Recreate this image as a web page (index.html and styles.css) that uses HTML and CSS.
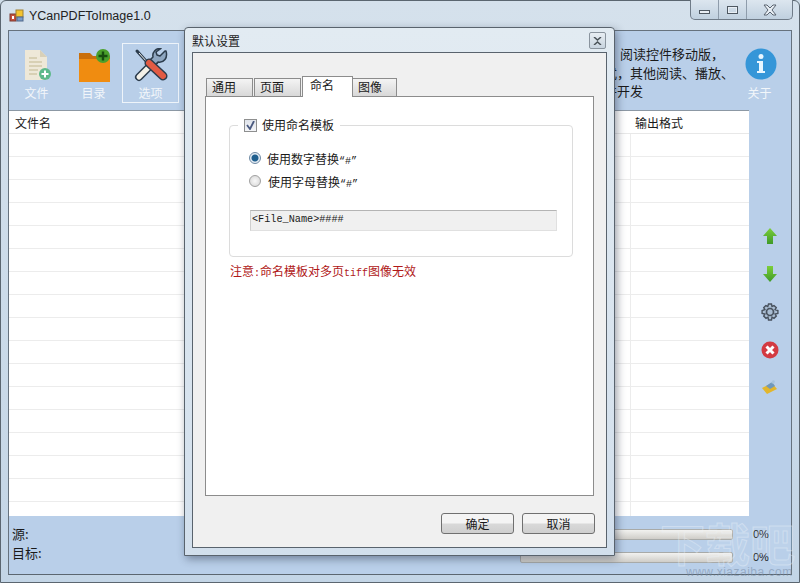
FILE: index.html
```html
<!DOCTYPE html>
<html lang="zh">
<head>
<meta charset="utf-8">
<title>YCanPDFToImage1.0</title>
<link rel="stylesheet" href="styles.css">
</head>
<body>
<div class="window">
  <div class="titlebar">
    <svg class="appicon" width="16" height="16" viewBox="0 0 16 16"><rect x="1" y="6" width="6" height="7" fill="#c8503c" stroke="#7a3a30"/><rect x="3" y="8" width="2" height="3" fill="#fff"/><rect x="7" y="2" width="7" height="7" fill="#f4c430" stroke="#a08030"/><rect x="8" y="9" width="6" height="4" fill="#7a9cc8" stroke="#50688a"/></svg>
    <span class="apptitle">YCanPDFToImage1.0</span>
    <div class="caption">
      <span class="capbtn min"><i></i></span>
      <span class="capbtn max"><i></i></span>
      <span class="capbtn close">
        <svg width="16" height="12" viewBox="0 0 16 12"><path d="M2 1h3l3 3 3-3h3L10 6l4 5h-3L8 8l-3 3H2l4-5z" fill="#e8eef4" stroke="#5a6470"/></svg>
      </span>
    </div>
  </div>
  <div class="client">
    <div class="toolbar">
      <div class="tool t1">
        <svg width="30" height="34" viewBox="0 0 30 34"><path d="M2 1h15l7 7v23H2z" fill="#eee8d8"/><path d="M17 1v7h7z" fill="#d8d0b8"/><path d="M6 9h8M6 13h13M6 17h13M6 21h9M6 25h8" stroke="#d8d0b4" stroke-width="2"/><circle cx="22" cy="25" r="6" fill="#5db98a"/><path d="M22 21.500v7M18.500 25h7" stroke="#fff" stroke-width="2"/></svg>
        <span>文件</span>
      </div>
      <div class="tool t2">
        <svg width="34" height="34" viewBox="0 0 34 34"><path d="M1 4h11l3 3h17v26H1z" fill="#c96f0c"/><path d="M1 10h31v23H1z" fill="#f08c10"/><circle cx="25" cy="7" r="7" fill="#4aa02c"/><path d="M25 2.500v9M20.500 7h9" stroke="#174d10" stroke-width="2.400"/></svg>
        <span>目录</span>
      </div>
      <div class="tool t3 selected">
        <svg width="34" height="34" viewBox="0 0 34 34">
          <path d="M5 29L21 13" stroke="#2c3c4c" stroke-width="8" stroke-linecap="round"/>
          <path d="M5 29L21 13" stroke="#f4f1e8" stroke-width="5" stroke-linecap="round"/>
          <path d="M31 3l-5 5-3-1-1-3 5-3.500C22 0 18 4 19 9l-3 3 5 5 3-3c6 1 10-4 8-11z" fill="#8ea6c0" stroke="#2c3c4c" stroke-width="1.500" stroke-linejoin="round"/>
          <path d="M3 3l9 10" stroke="#2c3c4c" stroke-width="3" stroke-linecap="round"/>
          <path d="M5 5l8 9" stroke="#f0f0f0" stroke-width="1"/>
          <path d="M15 15l14 13" stroke="#2c3c4c" stroke-width="9" stroke-linecap="round"/>
          <path d="M15 15l14 13" stroke="#e25b44" stroke-width="6" stroke-linecap="round"/>
        </svg>
        <span>选项</span>
      </div>
      <div class="promo">
        <div class="promo-first">阅读控件移动版，</div>
        <div>式，其他阅读、播放、</div>
        <div>件开发</div>
      </div>
      <div class="tool t4">
        <svg width="32" height="32" viewBox="0 0 32 32"><circle cx="16" cy="16" r="15.500" fill="#3596d8"/><circle cx="16" cy="8.500" r="2.500" fill="#e8f6ff"/><path d="M12 13h6v10h2v2h-8v-2h2v-8h-2z" fill="#e8f6ff"/></svg>
        <span>关于</span>
      </div>
    </div>
    <div class="middle">
      <div class="table">
        <div class="thead">
          <span class="th-name">文件名</span>
          <span class="th-format">输出格式</span>
        </div>
        <div class="tbody">
          <div class="row"></div><div class="row"></div><div class="row"></div><div class="row"></div>
          <div class="row"></div><div class="row"></div><div class="row"></div><div class="row"></div>
          <div class="row"></div><div class="row"></div><div class="row"></div><div class="row"></div>
          <div class="row"></div><div class="row"></div><div class="row"></div><div class="row"></div>
          <div class="column-line"></div>
        </div>
      </div>
      <div class="sidebar">
        <svg width="16" height="18" viewBox="0 0 16 18"><defs><linearGradient id="gu" x1="0" y1="0" x2="0" y2="1"><stop offset="0" stop-color="#7ccf3a"/><stop offset="1" stop-color="#3f9a28"/></linearGradient></defs><path d="M8 1l7 8h-4v8H5V9H1z" fill="url(#gu)"/></svg>
        <svg width="16" height="18" viewBox="0 0 16 18"><path d="M8 17L1 9h4V1h6v8h4z" fill="url(#gu)"/></svg>
        <svg width="18" height="18" viewBox="0 0 18 18"><path d="M7.500 1h3l.5 2.500 2-1 2.300 2.200-1.200 2L16.900 7.500v3l-2.800.6 1.200 2-2.300 2.200-2-1.100-.5 2.800h-3l-.5-2.800-2 1.100-2.300-2.200 1.200-2-2.800-.6v-3l2.800-.8-1.200-2L4.800 2.500l2 1z" fill="#a9bdd2" stroke="#48525e" stroke-width="1.400"/><circle cx="9" cy="9" r="3.500" fill="none" stroke="#48525e" stroke-width="1.700"/></svg>
        <svg width="18" height="18" viewBox="0 0 18 18"><circle cx="9" cy="9" r="8.500" fill="#d33a42"/><path d="M5.500 5.500l7 7M12.500 5.500l-7 7" stroke="#fff" stroke-width="3"/></svg>
        <svg width="18" height="16" viewBox="0 0 18 16"><path d="M1 9l10-5 5 6-10 5z" fill="#e2b62c"/><path d="M5 7l6-4 3 4-5 3z" fill="#6f98bc"/><path d="M10 4l2-3 2 1-1 3z" fill="#a8c4dc"/></svg>
      </div>
    </div>
    <div class="status">
      <div class="labels">
        <span>源:</span>
        <span>目标:</span>
      </div>
      <div class="progress">
        <div class="bar"></div><span>0%</span>
        <div class="bar"></div><span>0%</span>
      </div>
    </div>
  </div>
</div>

<div class="watermark">下载吧<small>www.xiazaiba.com</small></div>

<div class="dialog">
  <div class="dlg-title">
    <span>默认设置</span>
    <span class="dlg-close"><svg width="9" height="8" viewBox="0 0 9 8"><path d="M1 0l3.500 3L8 0M1 8l3.500-3L8 8" fill="none" stroke="#4a5258" stroke-width="1.500"/></svg></span>
  </div>
  <div class="dlg-client">
    <div class="tabs">
      <span class="tab">通用</span>
      <span class="tab">页面</span>
      <span class="tab active">命名</span>
      <span class="tab">图像</span>
    </div>
    <div class="tabpage">
      <div class="group">
        <label class="legend"><span class="check"><svg width="9" height="9" viewBox="0 0 9 9"><path d="M1 4l3 4 4-8" fill="none" stroke="#4a5a80" stroke-width="1.800"/></svg></span>使用命名模板</label>
        <div class="radio-row"><span class="radio on"></span><span>使用数字替换<span class="mono">“#”</span></span></div>
        <div class="radio-row second"><span class="radio"></span><span>使用字母替换<span class="mono">“#”</span></span></div>
        <div class="input">&lt;File_Name&gt;####</div>
      </div>
      <p class="note">注意<span class="mono">:</span>命名模板对多页<span class="mono">tiff</span>图像无效</p>
    </div>
    <div class="dlg-buttons">
      <button class="btn">确定</button>
      <button class="btn">取消</button>
    </div>
  </div>
</div>
</body>
</html>
```
FILE: styles.css
```css
* { box-sizing: border-box; }
html, body { margin: 0; padding: 0; }
body {
  width: 800px;
  height: 583px;
  overflow: hidden;
  position: relative;
  font-family: "Noto Sans CJK SC", "Liberation Sans", sans-serif;
  font-size: 12px;
  color: #1a1a1a;
  background: #cfdde9;
}
.mono { font-family: "Liberation Mono", monospace; font-size: 10px; }
.window {
  width: 800px;
  height: 583px;
  display: flex;
  flex-direction: column;
  padding: 0 7px 7px;
  background: linear-gradient(#d5e1ec, #c3d5e6);
  border: 1px solid #5b6670;
  border-radius: 6px 6px 0 0;
}
.titlebar {
  height: 29px;
  flex: none;
  display: flex;
  align-items: center;
  padding: 0 0 0 1px;
  position: relative;
}
.appicon { flex: none; }
.apptitle {
  margin-left: 4px;
  font-family: "Liberation Sans", sans-serif;
  font-size: 12.500px;
  color: #222;
}
.caption {
  position: absolute;
  right: -1px;
  top: -1px;
  height: 20px;
  width: 103px;
  display: flex;
  border: 1px solid #6f7b88;
  border-top: none;
  border-radius: 0 0 5px 5px;
  background: linear-gradient(#dce6ef, #c0d0df);
}
.capbtn {
  display: flex;
  align-items: center;
  justify-content: center;
  border-right: 1px solid #8e9cab;
}
.capbtn.min, .capbtn.max { width: 28px; }
.capbtn.close { flex: 1; border-right: none; }
.min i { display: block; width: 11px; height: 4px; margin-top: 5px; background: #e8eef4; border: 1px solid #4e5862; }
.max i { display: block; width: 11px; height: 8px; border: 1px solid #4e5862; box-shadow: inset 0 0 0 1px #e8eef4; }
.client {
  flex: 1;
  min-height: 0;
  display: flex;
  flex-direction: column;
  background: #b9cfe9;
  border: 1px solid #66727e;
  border-bottom-color: #5b6670;
}
.toolbar {
  height: 79px;
  flex: none;
  display: flex;
  padding: 12px 0 0 0;
  position: relative;
}
.tool {
  width: 57px;
  height: 60px;
  display: flex;
  flex-direction: column;
  align-items: center;
  color: #f2f6fa;
  font-size: 12px;
  line-height: 16px;
}
.tool svg { height: 34px; flex: none; margin-top: 6px; }
.tool span { margin-top: 2px; }
.t1 { margin-left: -1px; }
.t1 svg, .t2 svg { margin-left: 2px; }
.selected { border: 1px solid #eef4fa; }
.selected svg { margin-top: 4px; }
.selected span { margin-top: 3px; }
.promo {
  position: absolute;
  left: 595px;
  top: 14px;
  font-size: 13px;
  line-height: 18.500px;
  white-space: nowrap;
  color: #1a1a1a;
}
.promo-first { padding-left: 16px; }
.t4 { position: absolute; left: 722px; top: 11px; }
.t4 svg { height: 32px; margin: 6px 0 0 2px; }
.t4 span { margin-top: 5px; }
.middle {
  flex: 1;
  min-height: 0;
  display: flex;
}
.table {
  width: 740px;
  background: #fff;
  display: flex;
  flex-direction: column;
}
.thead {
  height: 24px;
  flex: none;
  display: flex;
  align-items: center;
  justify-content: space-between;
  font-size: 12px;
  padding: 0 66px 0 6px;
  border-top: 1px solid #8c98a4;
  border-bottom: 1px solid #e8e8e8;
}
.tbody { flex: 1; min-height: 0; position: relative; overflow: hidden; }
.row { height: 23px; border-bottom: 1px solid #ececec; }
.column-line { position: absolute; left: 621px; top: 0; bottom: 0; width: 1px; background: #ececec; }
.sidebar {
  flex: 1;
  display: flex;
  flex-direction: column;
  align-items: center;
  gap: 20px;
  padding-top: 117px;
}
.status {
  height: 58px;
  flex: none;
  display: flex;
  justify-content: space-between;
  padding: 9px 23px 0 3px;
}
.labels {
  display: flex;
  flex-direction: column;
  gap: 3px;
  margin-top: 1px;
  font-size: 13px;
  line-height: 16px;
}
.progress {
  width: 248px;
  display: grid;
  grid-template-columns: 213px 35px;
  grid-auto-rows: 11px;
  row-gap: 12px;
  padding-top: 4px;
  font-family: "Liberation Sans", sans-serif;
  font-size: 11px;
  line-height: 11px;
  align-items: center;
}
.progress span { padding-left: 20px; }
.bar {
  height: 11px;
  border: 1px solid #a8aaa8;
  border-radius: 2px;
  background: linear-gradient(#f2f2f0, #cfcdc8);
}
.watermark {
  position: absolute;
  left: 660px;
  top: 514px;
  width: 136px;
  font-size: 45px;
  font-weight: 700;
  line-height: 58px;
  color: rgba(255, 255, 255, 0.08);
  -webkit-text-stroke: 1px rgba(238, 244, 250, 0.4);
  white-space: nowrap;
  pointer-events: none;
}
.watermark small {
  display: block;
  margin: -6px 0 0 26px;
  font-family: "Liberation Sans", sans-serif;
  font-size: 12px;
  font-weight: 400;
  line-height: 12px;
  letter-spacing: 0.5px;
  color: rgba(120, 140, 165, 0.55);
  -webkit-text-stroke: 0;
}
.dialog {
  position: absolute;
  left: 184px;
  top: 27px;
  width: 431px;
  height: 529px;
  display: flex;
  flex-direction: column;
  padding: 0 7px 7px;
  background: linear-gradient(#e2ebf2, #d2dfec);
  border: 1px solid #59636d;
  border-radius: 4px 4px 0 0;
  box-shadow: 2px 3px 8px rgba(30, 40, 60, 0.45);
}
.dlg-title {
  height: 24px;
  flex: none;
  display: flex;
  align-items: center;
  justify-content: space-between;
  font-size: 12px;
  color: #222;
  padding-right: 1px;
}
.dlg-close {
  width: 17px;
  height: 17px;
  display: flex;
  align-items: center;
  justify-content: center;
  border: 1px solid #8a949e;
  border-radius: 2px;
  background: linear-gradient(#e8eef3, #c8d4df);
  margin-top: 1px;
}
.dlg-client {
  flex: 1;
  min-height: 0;
  display: flex;
  flex-direction: column;
  background: #f0f0f0;
  border: 1px solid #59636d;
  padding: 22px 12px 0 12px;
}
.tabs {
  height: 21px;
  flex: none;
  display: flex;
  align-items: flex-end;
  padding-left: 1px;
  position: relative;
  z-index: 1;
}
.tab {
  width: 47px;
  height: 18px;
  margin-right: 1px;
  border: 1px solid #8c8c8c;
  border-bottom: none;
  background: linear-gradient(#f4f4f4, #d8d8d8);
  font-size: 12px;
  line-height: 16px;
  padding-left: 5px;
}
.tab.active {
  width: 51px;
  height: 21px;
  margin: 0 0 -1px 0;
  padding-left: 7px;
  background: #fff;
  line-height: 16px;
  position: relative;
}
.tab.active + .tab { width: 45px; margin-left: -1px; }
.tabpage {
  height: 400px;
  flex: none;
  background: #fff;
  border: 1px solid #8c8c8c;
  padding: 28px 19px 0 23px;
}
.group {
  width: 344px;
  height: 132px;
  border: 1px solid #dcdcdc;
  border-radius: 4px;
  position: relative;
  padding: 23px 20px 0 19px;
}
.legend {
  position: absolute;
  left: 8px;
  top: -10px;
  display: flex;
  align-items: center;
  gap: 5px;
  background: #fff;
  padding: 0 6px;
  font-size: 12px;
  line-height: 18px;
}
.check {
  width: 13px;
  height: 13px;
  display: flex;
  align-items: center;
  justify-content: center;
  border: 1px solid #8e8f8f;
  background: linear-gradient(#dfe3ea, #f4f5f8);
}
.radio-row {
  height: 18px;
  display: flex;
  align-items: center;
  gap: 6px;
  font-size: 12px;
}
.radio-row.second { margin-top: 5px; }
.radio-row.second .radio + span { margin-left: 1px; }
.radio {
  width: 12px;
  height: 12px;
  border-radius: 50%;
  border: 1px solid #a0a0a0;
  background: radial-gradient(circle at 50% 50%, #f8f8f8, #d4d4d4);
}
.radio.on {
  border-color: #6f8aa4;
  background: radial-gradient(circle, #1f5f8e 0 3px, #e4ecf4 4px);
}
.input {
  width: 307px;
  height: 21px;
  margin: 20px 0 0 1px;
  background: #f0f0f0;
  border: 1px solid #e0e0e0;
  border-top-color: #b4b4b4;
  border-left-color: #cfcfcf;
  font-family: "Liberation Mono", monospace;
  font-size: 10.200px;
  line-height: 17px;
  padding-left: 1px;
}
.note {
  margin: 5px 0 0 1px;
  color: #b01818;
  font-size: 12px;
  line-height: 18px;
}
.dlg-buttons {
  display: flex;
  justify-content: flex-end;
  gap: 8px;
  padding: 17px 0 0 0;
  margin-right: -1px;
}
.btn {
  width: 73px;
  height: 21px;
  padding: 0;
  border: 1px solid #707070;
  border-radius: 3px;
  background: linear-gradient(#f4f4f4 0 45%, #d8d8d8 55%, #cfcfcf);
  font-family: inherit;
  font-size: 12px;
  line-height: 18px;
  color: #1a1a1a;
}
```
